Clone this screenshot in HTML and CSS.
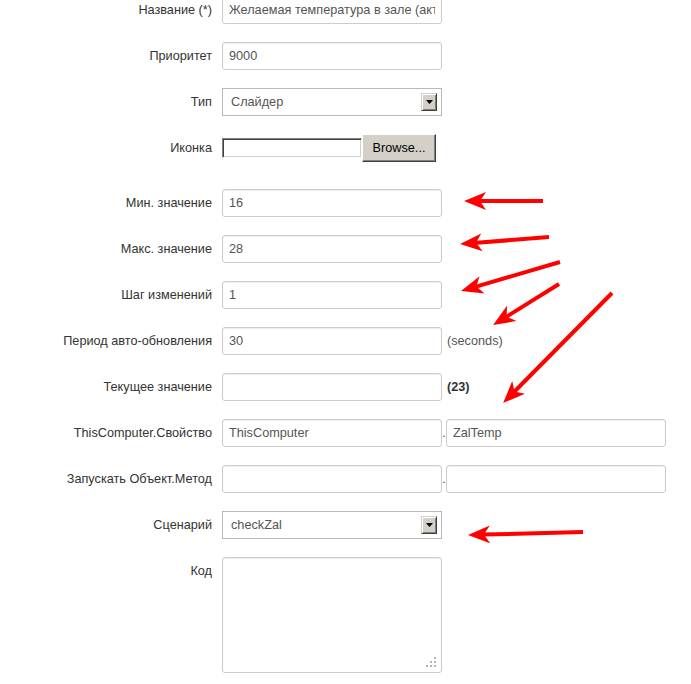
FILE: index.html
```html
<!DOCTYPE html>
<html lang="ru">
<head>
<meta charset="utf-8">
<title>Форма</title>
<link rel="stylesheet" href="styles.css">
</head>
<body>
<form class="form">
  <div class="row">
    <label class="label">Название (*)</label>
    <input class="input" type="text" value="Желаемая температура в зале (актуальная)">
  </div>
  <div class="row">
    <label class="label">Приоритет</label>
    <input class="input" type="text" value="9000">
  </div>
  <div class="row">
    <label class="label">Тип</label>
    <div class="select"><span>Слайдер</span><span class="drop"><svg width="7" height="4" viewBox="0 0 7 4"><path d="M0 0H7L3.5 4Z" fill="#000"/></svg></span></div>
  </div>
  <div class="row row-file">
    <label class="label">Иконка</label>
    <div class="file"><span class="file-box"></span><span class="browse">Browse...</span></div>
  </div>
  <div class="row">
    <label class="label">Мин. значение</label>
    <input class="input" type="text" value="16">
  </div>
  <div class="row">
    <label class="label">Макс. значение</label>
    <input class="input" type="text" value="28">
  </div>
  <div class="row">
    <label class="label">Шаг изменений</label>
    <input class="input" type="text" value="1">
  </div>
  <div class="row">
    <label class="label">Период авто-обновления</label>
    <input class="input" type="text" value="30">
    <span class="suffix">(seconds)</span>
  </div>
  <div class="row">
    <label class="label">Текущее значение</label>
    <input class="input" type="text" value="">
    <span class="suffix bold">(23)</span>
  </div>
  <div class="row">
    <label class="label">ThisComputer.Свойство</label>
    <input class="input" type="text" value="ThisComputer">
    <span class="dot">.</span>
    <input class="input" type="text" value="ZalTemp">
  </div>
  <div class="row">
    <label class="label">Запускать Объект.Метод</label>
    <input class="input" type="text" value="">
    <span class="dot">.</span>
    <input class="input" type="text" value="">
  </div>
  <div class="row">
    <label class="label">Сценарий</label>
    <div class="select"><span>checkZal</span><span class="drop"><svg width="7" height="4" viewBox="0 0 7 4"><path d="M0 0H7L3.5 4Z" fill="#000"/></svg></span></div>
  </div>
  <div class="row">
    <label class="label">Код</label>
    <div class="code"><svg class="grip" width="10" height="10" viewBox="0 0 10 10"><g fill="#b4b4b4"><rect x="8" y="0" width="2" height="2"/><rect x="4" y="4" width="2" height="2"/><rect x="8" y="4" width="2" height="2"/><rect x="0" y="8" width="2" height="2"/><rect x="4" y="8" width="2" height="2"/><rect x="8" y="8" width="2" height="2"/></g></svg></div>
  </div>
</form>
<svg class="arrows" width="691" height="684" viewBox="0 0 691 684">
  <defs>
    <marker id="ah" markerWidth="24" markerHeight="20" refX="8" refY="9" orient="auto" markerUnits="userSpaceOnUse">
      <path d="M0 0L22 9L0 18L6 9Z" fill="#ff0000"/>
    </marker>
  </defs>
  <g stroke="#ff0000" stroke-width="4" fill="none" marker-end="url(#ah)">
    <line x1="543" y1="201" x2="478" y2="201"/>
    <line x1="549" y1="237" x2="474" y2="243"/>
    <line x1="560" y1="262" x2="474.4" y2="287.1"/>
    <line x1="559" y1="284" x2="505" y2="317.6"/>
    <line x1="612" y1="293" x2="513" y2="393"/>
    <line x1="583" y1="532" x2="482" y2="534.6"/>
  </g>
</svg>
</body>
</html>
```
FILE: styles.css
```css
* { box-sizing: border-box; }

body {
  margin: 0;
  background: #fff;
  font-family: "Liberation Sans", Arial, sans-serif;
  font-size: 12.7px;
  color: #333;
}

.form {
  margin-top: -4px;
}

.row {
  display: flex;
  align-items: flex-start;
  margin-bottom: 18px;
}

.row-file {
  margin-bottom: 27px;
}

.label {
  flex: none;
  width: 212px;
  margin-right: 10px;
  text-align: right;
  line-height: 28px;
  color: #333;
}

.input {
  flex: none;
  width: 220px;
  height: 28px;
  margin: 0;
  padding: 0 6px;
  border: 1px solid #cccccc;
  border-radius: 3px;
  background: #fff;
  box-shadow: inset 0 1px 1px rgba(0, 0, 0, 0.075);
  font: 12.7px "Liberation Sans", Arial, sans-serif;
  color: #555;
  outline: none;
}

.select {
  flex: none;
  width: 220px;
  height: 28px;
  display: flex;
  align-items: center;
  justify-content: space-between;
  padding: 0 4px 0 8px;
  border: 1px solid #b8b8b8;
  background: #fff;
  color: #555;
}

.drop {
  width: 16px;
  height: 18px;
  display: flex;
  align-items: center;
  justify-content: center;
  background: #d4d0c8;
  border: 1px solid;
  border-color: #d4d0c8 #404040 #404040 #d4d0c8;
  box-shadow: inset 1px 1px #ffffff, inset -1px -1px #808080;
}

.file {
  display: flex;
  align-items: center;
  height: 28px;
}

.file-box {
  width: 140px;
  height: 20px;
  border: 1px solid;
  border-color: #808080 #ffffff #ffffff #808080;
  box-shadow: inset 1px 1px #404040, inset -1px -1px #d4d0c8;
  background: #fff;
}

.browse {
  width: 74px;
  height: 28px;
  display: flex;
  align-items: center;
  justify-content: center;
  background: #d4d0c8;
  border: 1px solid;
  border-color: #ffffff #404040 #404040 #ffffff;
  box-shadow: inset -1px -1px #808080;
  color: #000;
  font-size: 12.7px;
}

.suffix {
  margin-left: 5px;
  line-height: 28px;
  color: #555;
}

.bold {
  font-weight: bold;
  color: #333;
}

.dot {
  width: 4px;
  line-height: 28px;
  text-align: center;
  color: #555;
}

.code {
  flex: none;
  width: 220px;
  height: 116px;
  display: flex;
  flex-direction: column;
  border: 1px solid #cccccc;
  border-radius: 3px;
  background: #fff;
  box-shadow: inset 0 1px 1px rgba(0, 0, 0, 0.075);
}

.grip {
  margin-top: auto;
  align-self: flex-end;
  margin-right: 5px;
  margin-bottom: 5px;
}

.arrows {
  position: absolute;
  top: 0;
  left: 0;
  pointer-events: none;
}
```
